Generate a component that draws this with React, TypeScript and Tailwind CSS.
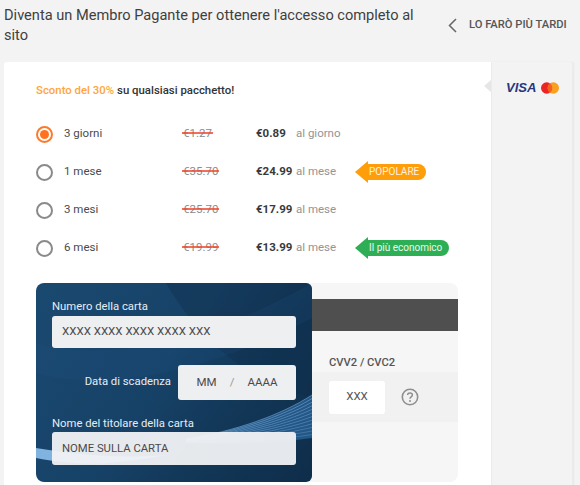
import React from "react";

const plans = [
  { label: "3 giorni", old: "€1.27", price: "€0.89", unit: "al giorno", on: true },
  { label: "1 mese", old: "€35.70", price: "€24.99", unit: "al mese", badge: "POPOLARE", color: "orange" },
  { label: "3 mesi", old: "€25.70", price: "€17.99", unit: "al mese" },
  { label: "6 mesi", old: "€19.99", price: "€13.99", unit: "al mese", badge: "Il più economico", color: "green" },
];

function Badge({ text, color }: { text: string; color?: string }) {
  const orange = color === "orange";
  return (
    <div className="flex items-center">
      <div className={orange ? "w-0 h-0 border-y-[11px] border-y-transparent border-r-[13px] border-r-[#ff9d0a]" : "w-0 h-0 border-y-[11px] border-y-transparent border-r-[13px] border-r-[#2eaf55]"} />
      <div className={orange ? "h-[16px] pl-[1px] pr-[7px] rounded-r-full bg-[#ff9d0a] text-[#fff3dc] text-[10px] leading-[16px]" : "h-[16px] pl-[1px] pr-[7px] rounded-r-full bg-[#2eaf55] text-[#eaf8ee] text-[10px] leading-[16px]"}>{text}</div>
    </div>
  );
}

const fan = [0, 1, 2, 3, 4, 5, 6, 7, 8, 9, 10, 11];

export default function App() {
  return (
    <div className="w-[580px] h-[485px] overflow-hidden bg-[#f3f3f3] text-[#3d3d3d] font-['Roboto',sans-serif]">
      <header className="flex h-[62px]">
        <h1 className="w-[429px] pl-1 pt-[5px] text-[14.6px] leading-[20px] font-normal text-[#3f3f3f]">
          Diventa un Membro Pagante per ottenere l'accesso completo al sito
        </h1>
        <div className="ml-[19px] flex items-center h-[50px] gap-[12px] text-[#555]">
          <svg width="9" height="15" viewBox="0 0 9 15" fill="none" stroke="#666" strokeWidth="1.5"><path d="M8 1 1.5 7.5 8 14" /></svg>
          <span className="text-[11.2px] font-medium">LO FARÒ PIÙ TARDI</span>
        </div>
      </header>
      <main className="flex ml-1 h-[423px]">
        <section className="w-[487px] bg-white rounded-tl-[3px] pl-[32px] pt-[20px]">
          <p className="text-[11.4px] leading-[16px] font-medium text-[#333]">
            <span className="text-[#ffa53c]">Sconto del 30%</span> su qualsiasi pacchetto!
          </p>
          <div className="mt-[17px] flex flex-col">
            {plans.map((p) => (
              <div key={p.label} className="flex items-center h-[38px] text-[11.5px]">
                {p.on ? (
                  <span className="flex items-center justify-center w-[17px] h-[17px] rounded-full border-2 border-[#ff7a28]">
                    <span className="w-[9px] h-[9px] rounded-full bg-[#ff7320]" />
                  </span>
                ) : (
                  <span className="w-[17px] h-[17px] rounded-full border-2 border-[#8a8a8a]" />
                )}
                <span className="w-[119px] ml-[11px] text-[#4b4b4b]">{p.label}</span>
                <span className="w-[73px]">
                  <span className="relative inline-block text-[#8c8c8c]">
                    {p.old}
                    <span className="absolute left-[-1px] right-[-1px] top-[7px] h-[2px] bg-[#ee4b33]/80" />
                  </span>
                </span>
                <span className="w-[40px] font-bold text-[#3a3a3a]">{p.price}</span>
                <span className="w-[59px] text-[#949494]">{p.unit}</span>
                {p.badge && <Badge text={p.badge} color={p.color} />}
              </div>
            ))}
          </div>
          <div className="relative mt-[16px] w-[422px] h-[199px] rounded-[8px] bg-[#f6f6f6] overflow-hidden">
            <div className="mt-[16px] h-[32px] bg-[#4f4f4f]" />
            <div className="ml-[293px] mt-[25px] text-[11.2px] leading-[14px] font-medium text-[#555]">CVV2 / CVC2</div>
            <div className="mt-[2px] h-[50px] bg-[#f1f1f1] flex items-center pl-[293px]">
              <div className="flex items-center justify-center w-[56px] h-[33px] rounded-[3px] bg-white text-[11.5px] text-[#555]">XXX</div>
              <svg className="ml-[16px]" width="18" height="18" viewBox="0 0 18 18" fill="none">
                <circle cx="9" cy="9" r="7.7" stroke="#8f8f8f" strokeWidth="1.6" />
                <path d="M6.6 7.1c0-1.4 1-2.2 2.4-2.2s2.4.8 2.4 2.1c0 1.9-2.4 1.9-2.4 3.7" stroke="#8f8f8f" strokeWidth="1.5" />
                <circle cx="9" cy="13" r="1" fill="#8f8f8f" />
              </svg>
            </div>
            <div className="absolute left-0 top-0 w-[276px] h-[199px] rounded-[6px] overflow-hidden bg-[linear-gradient(125deg,#1a4970_0%,#174268_45%,#123757_70%,#0e2d4a_100%)] px-[16px] text-white">
              <svg className="absolute inset-0" width="276" height="199" viewBox="0 0 276 199" fill="none">
                <path d="M130 0 C165 60 215 100 276 115 L276 0 Z" fill="#0e2c49" opacity="0.35" />
                <path d="M0 60 C70 80 170 60 276 0 L276 35 C170 90 70 110 0 90 Z" fill="#24598a" opacity="0.15" />
                <path d="M0 165 C40 171 80 176 130 172 C70 184 35 182 0 175 Z" fill="#8cc0ec" opacity="0.9" />
                <path d="M150 156 C200 148 245 132 276 112 L276 155 C240 160 200 162 150 160 Z" fill="#2a6499" opacity="0.75" />
                {fan.map((i) => (
                  <path key={i} d={`M150 ${156 + i * 0.3} C200 ${148 + i * 1.1} 245 ${132 + i * 2.2} 276 ${112 + i * 3.6}`} stroke="#8dbde8" strokeWidth="0.6" opacity={0.8 - i * 0.03} />
                ))}
              </svg>
              <div className="relative">
                <div className="pt-[17px] text-[11.3px] leading-[14px] text-[#e6edf3]">Numero della carta</div>
                <div className="mt-[2px] h-[32px] flex items-center rounded-[3px] bg-[#eeeff1] pl-[10px] text-[11.5px] text-[#4a4a4a]">XXXX XXXX XXXX XXXX XXX</div>
                <div className="mt-[17px] flex items-center h-[35px]">
                  <div className="w-[126px] pr-[7px] text-right text-[11.3px] text-[#e6edf3]">Data di scadenza</div>
                  <div className="flex-1 h-full flex items-center justify-center gap-[13px] rounded-[3px] bg-[#eeeff1] text-[11.5px] text-[#4a4a4a]">
                    <span>MM</span><span className="text-[#999]">/</span><span>AAAA</span>
                  </div>
                </div>
                <div className="mt-[17px] text-[11.3px] leading-[14px] text-[#e6edf3]">Nome del titolare della carta</div>
                <div className="mt-[1px] h-[33px] flex items-center rounded-[3px] bg-[#f1f2f4]/95 pl-[10px] pt-[2px] text-[11.3px] text-[#4a4a4a]">NOME SULLA CARTA</div>
              </div>
            </div>
          </div>
        </section>
        <aside className="relative w-[82px] bg-[#f3f3f3] border-x border-[#ebebeb] rounded-tr-[3px] shadow-[1px_0_2px_rgba(0,0,0,0.05)]">
          <div className="absolute left-[-8px] top-[18px] w-0 h-0 border-y-[6px] border-y-transparent border-r-[7px] border-r-[#e6e6e6]" />
          <div className="flex items-center pt-[18px] pl-[14px]">
            <span className="font-['Liberation_Sans',sans-serif] italic font-bold text-[13px] leading-[16px] text-[#27377c]">VISA</span>
            <svg className="ml-[5px]" width="18" height="12" viewBox="0 0 19 12">
              <circle cx="6" cy="6" r="6" fill="#eb2424" />
              <circle cx="13" cy="6" r="6" fill="#f9a01e" />
              <path d="M9.5 1.1a6 6 0 0 1 0 9.8 6 6 0 0 1 0-9.8Z" fill="#f4611f" />
            </svg>
          </div>
        </aside>
      </main>
    </div>
  );
}
